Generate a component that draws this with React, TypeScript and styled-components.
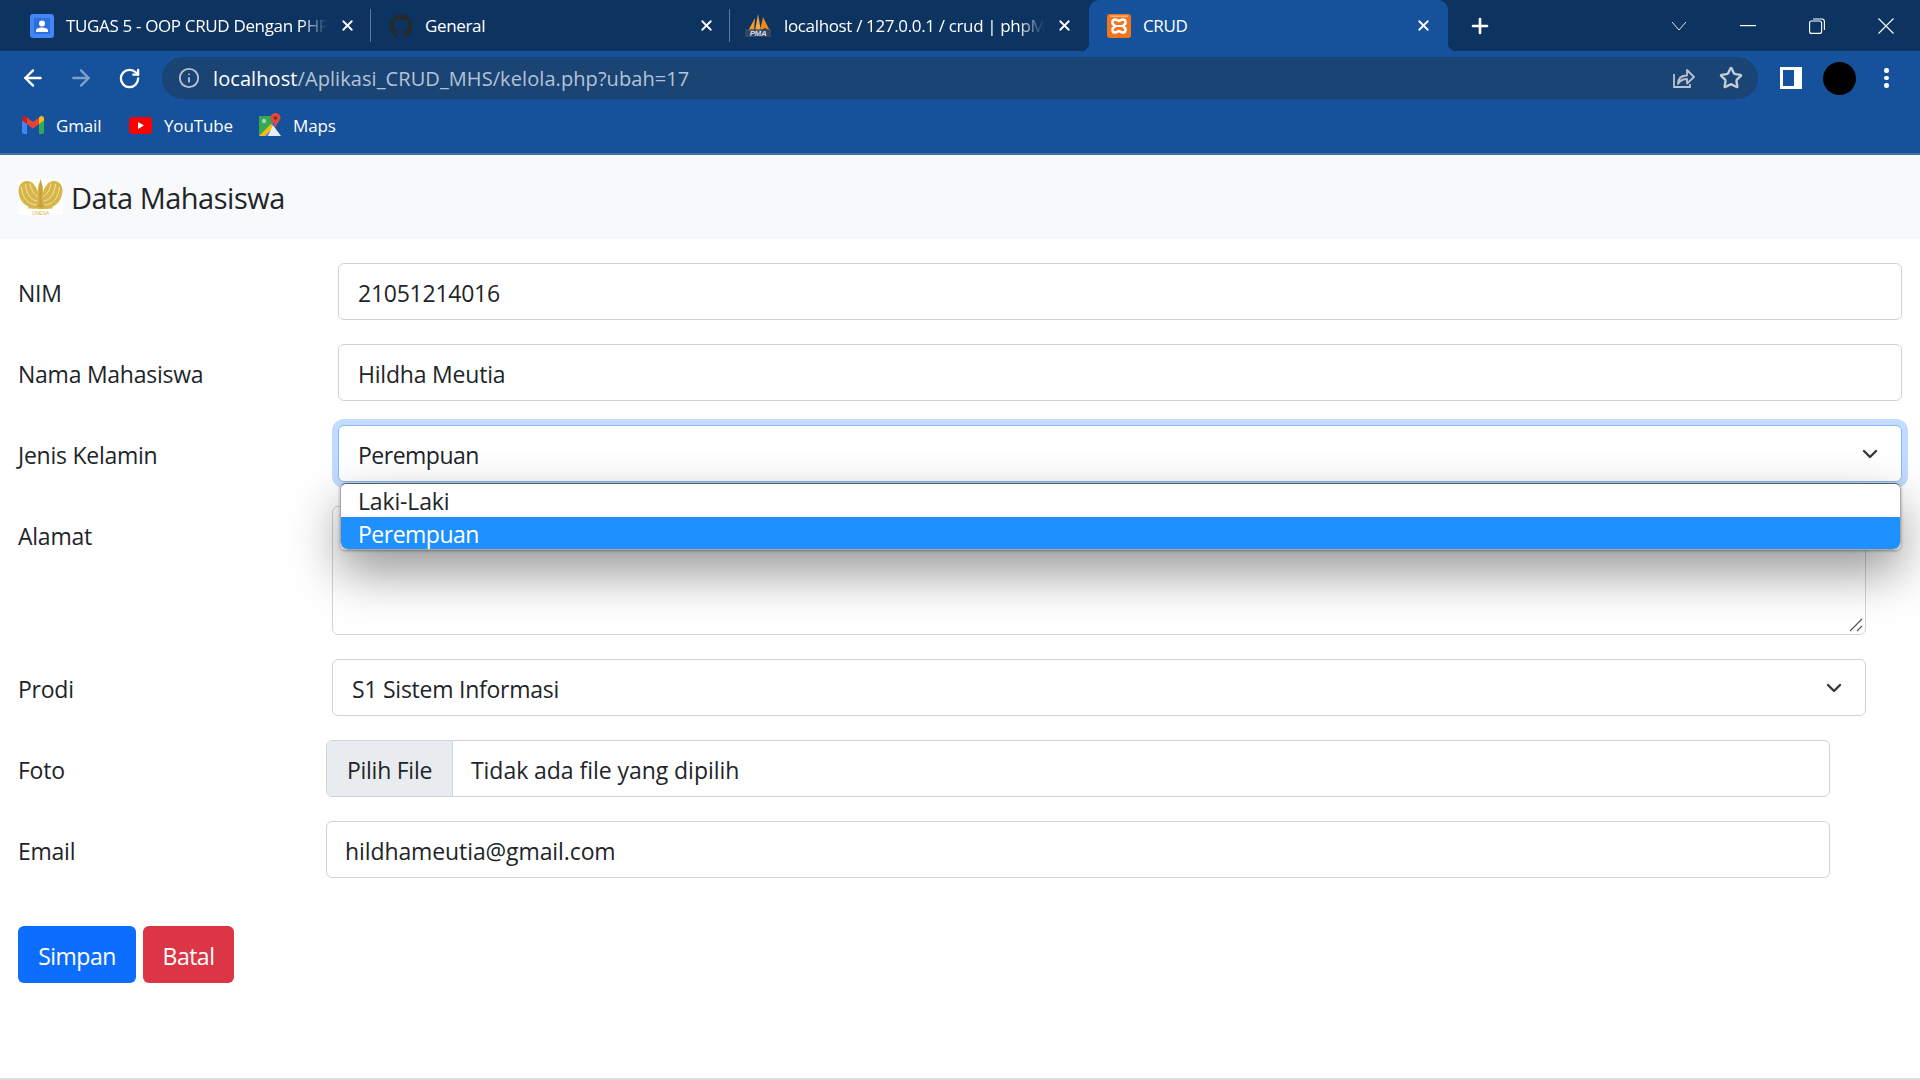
import React from 'react';
import styled, { createGlobalStyle } from 'styled-components';
import { ArrowLeft, ArrowRight, RotateCw, Info, Star, X, Plus, ChevronDown } from 'lucide-react';
import { FaGithub } from 'react-icons/fa';

const FONT = '"Open Sans", "Noto Sans", "Liberation Sans", sans-serif';

const GlobalStyle = createGlobalStyle`
	html, body {
		margin: 0;
		padding: 0;
		background: #fff;
		overflow: hidden;
	}
	body {
		font-family: ${FONT};
		color: #212529;
	}
	* {
		box-sizing: border-box;
	}
`;

const Page = styled.div`
	width: 1920px;
	height: 1080px;
	display: flex;
	flex-direction: column;
	border-bottom: 2px solid #dcdcdc;
	overflow: hidden;
`;

/* browser chrome */
const TabStrip = styled.div`
	height: 51px;
	flex: none;
	display: flex;
	align-items: stretch;
	padding-left: 12px;
	background: #0d3461;
	color: #fff;
`;

const Tab = styled.div<{ $active?: boolean; $sep?: boolean }>`
	position: relative;
	width: 359px;
	flex: none;
	display: flex;
	align-items: center;
	gap: 12px;
	padding: 0 ${(p) => (p.$sep ? 14 : 16)}px 0 18px;
	font-size: 17px;
	letter-spacing: -0.35px;
	background: ${(p) => (p.$active ? '#15529b' : 'transparent')};
	border-radius: ${(p) => (p.$active ? '10px 10px 0 0' : '0')};
	border-right: ${(p) => (p.$sep ? '1px solid #5d7a9b' : 'none')};
	margin: ${(p) => (p.$sep ? '9px 0' : '0')};
	${(p) =>
		p.$active &&
		`
		&::before, &::after {
			content: '';
			position: absolute;
			bottom: 0;
			width: 8px;
			height: 8px;
		}
		&::before {
			left: -8px;
			background: radial-gradient(circle at 0 0, transparent 8px, #15529b 8.5px);
		}
		&::after {
			right: -8px;
			background: radial-gradient(circle at 100% 0, transparent 8px, #15529b 8.5px);
		}
	`}
`;

const TabIcon = styled.span`
	width: 24px;
	height: 24px;
	flex: none;
	display: flex;
	align-items: center;
	justify-content: center;
`;

const TabTitle = styled.span<{ $fade?: boolean }>`
	flex: 1;
	min-width: 0;
	overflow: hidden;
	white-space: nowrap;
	-webkit-mask-image: ${(p) =>
		p.$fade ? 'linear-gradient(to right, #000 calc(100% - 26px), transparent)' : 'none'};
	mask-image: ${(p) =>
		p.$fade ? 'linear-gradient(to right, #000 calc(100% - 26px), transparent)' : 'none'};
`;

const NewTab = styled.div`
	width: 64px;
	flex: none;
	display: flex;
	align-items: center;
	justify-content: center;
`;

const WindowControls = styled.div`
	margin-left: auto;
	display: flex;
	align-items: center;
`;

const WindowButton = styled.div`
	width: 69px;
	height: 42px;
	display: flex;
	align-items: center;
	justify-content: center;
`;

const Toolbar = styled.div`
	height: 48px;
	flex: none;
	display: flex;
	align-items: flex-end;
	padding-left: 9px;
	background: #15529b;
	color: #fff;
`;

const NavButtons = styled.div`
	height: 42px;
	display: flex;
	align-items: center;
`;

const NavButton = styled.div<{ $dim?: boolean }>`
	width: 48px;
	height: 42px;
	display: flex;
	align-items: center;
	justify-content: center;
	opacity: ${(p) => (p.$dim ? 0.45 : 1)};
`;

const AddressBar = styled.div`
	width: 1596px;
	height: 42px;
	margin-left: 9px;
	display: flex;
	align-items: center;
	padding: 0 4px 0 16px;
	background: #1a4474;
	border-radius: 21px;
`;

const Url = styled.div`
	margin-left: 13px;
	flex: 1;
	font-size: 20px;
	letter-spacing: 0.08px;
	color: #b4c3d6;
	white-space: nowrap;
`;

const Host = styled.span`
	color: #fff;
`;

const AddressAction = styled.div`
	width: 47px;
	display: flex;
	align-items: center;
	justify-content: center;
`;

const ToolbarEnd = styled.div`
	height: 42px;
	flex: 1;
	display: flex;
	align-items: center;
	padding-left: 22px;
`;

const Avatar = styled.div`
	width: 33px;
	height: 33px;
	border-radius: 50%;
	background: #000;
	margin-left: 21px;
`;

const Kebab = styled.div`
	margin-left: 28px;
	display: flex;
	flex-direction: column;
	gap: 3px;
`;

const KebabDot = styled.span`
	width: 4.5px;
	height: 4.5px;
	border-radius: 50%;
	background: #fff;
`;

const Bookmarks = styled.div`
	height: 56px;
	flex: none;
	display: flex;
	align-items: center;
	padding: 0 0 2px 22px;
	background: #15529b;
	color: #fff;
	font-size: 17px;
	letter-spacing: -0.15px;
	border-bottom: 2px solid #4472ab;
`;

const Bookmark = styled.div<{ $width: number }>`
	width: ${(p) => p.$width}px;
	display: flex;
	align-items: center;
	gap: 12px;
`;

/* page */
const Navbar = styled.div`
	height: 84px;
	flex: none;
	display: flex;
	align-items: center;
	padding: 0 18px;
	background: #f8f9fa;
	gap: 8px;
`;

const Brand = styled.div`
	font-size: 29px;
	letter-spacing: -0.5px;
	color: #212529;
	margin-top: 1px;
`;

const Form = styled.div`
	padding: 24px 0 0 18px;
	display: flex;
	flex-direction: column;
	gap: 24px;
`;

const Row = styled.div<{ $left: number; $right: number }>`
	display: grid;
	grid-template-columns: ${(p) => p.$left - 18}px ${(p) => p.$right - p.$left}px;
	align-items: start;
`;

const Label = styled.div`
	height: 57px;
	display: flex;
	align-items: center;
	padding-top: 3px;
	font-size: 23px;
	letter-spacing: -0.25px;
	color: #212529;
`;

const Control = styled.div<{ $focus?: boolean; $height?: number; $tracking?: number; $inset?: number }>`
	position: relative;
	height: ${(p) => p.$height ?? 57}px;
	display: flex;
	align-items: ${(p) => (p.$height ? 'flex-start' : 'center')};
	padding: ${(p) => (p.$height ? '12px' : '3px')} ${(p) => p.$inset ?? 19}px 0;
	background: #fff;
	border: 1px solid ${(p) => (p.$focus ? '#86b7fe' : '#ced4da')};
	border-radius: 6px;
	font-size: 23px;
	letter-spacing: ${(p) => p.$tracking ?? -0.25}px;
	color: #212529;
	box-shadow: ${(p) => (p.$focus ? '0 0 0 6px rgba(13, 110, 253, 0.25)' : 'none')};
`;

const Chevron = styled.span<{ $right: number }>`
	position: absolute;
	right: ${(p) => p.$right}px;
	top: 16px;
	display: flex;
	color: #343a40;
`;

const Dropdown = styled.div`
	position: absolute;
	z-index: 5;
	left: 1px;
	top: 57px;
	width: 1561px;
	height: 67px;
	background: #fff;
	border: 1px solid #a8a8a8;
	border-top-color: #5c5c5c;
	border-radius: 6px 6px 8px 8px;
	overflow: hidden;
`;

const DropdownShadow = styled.div`
	position: absolute;
	z-index: 4;
	left: 1px;
	top: 57px;
	width: 1561px;
	height: 67px;
	border-radius: 6px;
	box-shadow: 0 22px 50px rgba(0, 0, 0, 0.42), 0 1px 3px rgba(0, 0, 0, 0.35);
`;

const Option = styled.div<{ $selected?: boolean }>`
	height: 33px;
	display: flex;
	align-items: center;
	background: ${(p) => (p.$selected ? '#1e90ff' : 'transparent')};
	padding-left: 17px;
	color: ${(p) => (p.$selected ? '#fff' : '#212529')};
	letter-spacing: ${(p) => (p.$selected ? -0.5 : -0.15)}px;
`;

const ResizeGrip = styled.svg`
	position: absolute;
	right: 2px;
	bottom: 2px;
`;

const FileButton = styled.div`
	width: 126px;
	height: 55px;
	flex: none;
	display: flex;
	align-items: center;
	justify-content: center;
	padding-top: 3px;
	margin: -3px 0 0 -18px;
	background: #e9ecef;
	border-right: 1px solid #ced4da;
	border-radius: 5px 0 0 5px;
`;

const FileName = styled.span`
	margin-left: 18px;
	letter-spacing: -0.05px;
`;

const Actions = styled.div`
	display: flex;
	gap: 7px;
	margin-top: 24px;
`;

const Button = styled.div<{ $color: string; $width: number }>`
	width: ${(p) => p.$width}px;
	height: 57px;
	display: flex;
	align-items: center;
	justify-content: center;
	padding-top: 2px;
	border-radius: 6px;
	background: ${(p) => p.$color};
	color: #fff;
	font-size: 23px;
	letter-spacing: -0.5px;
`;

const ClassroomIcon = () => (
	<svg width="24" height="24" viewBox="0 0 24 24">
		<rect width="24" height="24" rx="3" fill="#4285f4" />
		<rect x="4" y="4" width="16" height="16" fill="#2f6fdb" />
		<circle cx="12" cy="9.5" r="3" fill="#fff" />
		<path d="M6 18v-1.5c0-2 3-3 6-3s6 1 6 3V18z" fill="#fff" />
	</svg>
);

const PmaIcon = () => (
	<svg width="26" height="24" viewBox="0 0 26 24" style={{ flex: 'none', marginLeft: '-4px' }}>
		<path d="M3 17 10 4l-1 13z" fill="#f89c1c" />
		<path d="M10 17 13 0l3 17z" fill="#f7a942" />
		<path d="M15 17 18 3l7 14-5-3z" fill="#ee8a17" />
		<rect x="0" y="15" width="26" height="8" fill="#3d4b69" opacity="0.75" />
		<text x="13" y="22" fontSize="8" fontWeight="700" fontStyle="italic" textAnchor="middle" fill="#d8dce6" fontFamily="Liberation Sans">PMA</text>
	</svg>
);

const XamppIcon = () => (
	<svg width="24" height="24" viewBox="0 0 24 24">
		<rect width="24" height="24" rx="3" fill="#f0751f" />
		<rect x="3" y="1.5" width="18" height="1.6" fill="#fbb27a" />
		<path d="M8 5.5c2 0 3 1.5 4 1.5s2-1.5 4-1.5c2.5 0 3.5 3.5 1.5 5L16 12l1.5 1.5c2 1.5 1 5-1.500 5-2 0-3-1.500-4-1.500s-2 1.500-4 1.500c-2.500 0-3.500-3.500-1.500-5L8 12l-1.500-1.500C4.500 9 5.500 5.500 8 5.500z" fill="none" stroke="#fff" strokeWidth="2.6" />
		<path d="M9 12h6" stroke="#fff" strokeWidth="2" />
	</svg>
);

const ShareIcon = () => (
	<svg width="24" height="24" viewBox="0 0 24 24" fill="none" stroke="#b9c3cf" strokeWidth="1.8">
		<path d="M2 8v13h16v-3" />
		<path d="M6 18c0-5 3-8.500 9-8.500V4l7 7-7 6.500V13c-4 0-7 1.500-9 5z" strokeLinejoin="round" />
	</svg>
);

const SidePanelIcon = () => (
	<svg width="22" height="22" viewBox="0 0 22 22">
		<rect width="22" height="22" fill="#fff" />
		<rect x="3" y="3" width="11" height="16" fill="#15529b" />
	</svg>
);

const GmailIcon = () => (
	<svg width="22" height="18" viewBox="0 0 22 18">
		<path d="M0 3v13c0 1 .7 2 2 2h3V7z" fill="#4285f4" />
		<path d="M22 3v13c0 1-.7 2-2 2h-3V7z" fill="#34a853" />
		<path d="M5 8 0 4.500V2.500C0 .5 2.300-.6 3.800.5L5 1.500z" fill="#c5221f" />
		<path d="M5 8V1.500L11 6l6-4.500V8l-6 4.500z" fill="#ea4335" />
		<path d="M17 8l5-3.500v-2c0-2-2.300-3.100-3.800-2L17 1.500z" fill="#fbbc04" />
	</svg>
);

const YoutubeIcon = () => (
	<svg width="23" height="17" viewBox="0 0 23 17">
		<rect width="23" height="17" rx="4" fill="#f00" />
		<path d="M9 5l6 3.500L9 12z" fill="#fff" />
	</svg>
);

const MapsIcon = () => (
	<svg width="22" height="24" viewBox="0 0 22 24">
		<path d="M0 3h14v20H0z" fill="#34a853" />
		<path d="M0 23 14 9v14z" fill="#4285f4" />
		<path d="M0 23 12 11l3 3-9 9z" fill="#fbbc04" />
		<path d="M14 12l8 11H9z" fill="#e8eef7" />
		<circle cx="5" cy="8" r="2.200" fill="#9fd6ae" />
		<path d="M16.500 0c3 0 5 2.200 5 4.800 0 3-3.500 5-5 10-1.500-5-5-7-5-10 0-2.600 2-4.800 5-4.800z" fill="#dd4b3e" />
		<circle cx="16.500" cy="5" r="1.800" fill="#8a2a22" />
	</svg>
);

const Wing = () => (
	<>
		<path d="M20 29C8 30 0 22 0.500 10 1.500 4 6 1.500 10 2 15 3 18 7 20 13z" fill="#d8b548" />
		<g fill="none" stroke="#f1e3ae" strokeWidth="1">
			<path d="M19 26C10 26 4.500 19 3.500 8" />
			<path d="M19 22C12.500 21 8.500 15 7.500 5" />
			<path d="M19.500 17.500C16 15 13 11 12 4.500" />
		</g>
	</>
);

const UnesaLogo = () => (
	<svg width="45" height="36" viewBox="0 0 45 36">
		<rect width="45" height="36" fill="#fff" />
		<Wing />
		<g transform="translate(45 0) scale(-1 1)">
			<Wing />
		</g>
		<path d="M22.500 0 24.800 8V25l3 4h-10.600l3-4V8z" fill="#c9a336" />
		<path d="M9 29c5-2.500 9-2.500 13.500 0 4.500-2.500 8.500-2.500 13.500 0-5 1.500-22 1.500-27 0z" fill="#d8b548" />
		<text x="22.500" y="35.500" fontSize="5" textAnchor="middle" fill="#d8b548" fontFamily="Liberation Sans">UNESA</text>
	</svg>
);

const App = () => {
	return (
		<Page>
			<GlobalStyle />
			<TabStrip>
				<Tab $sep>
					<TabIcon><ClassroomIcon /></TabIcon>
					<TabTitle $fade>TUGAS 5 - OOP CRUD Dengan PHP dan MySQL</TabTitle>
					<X size={17} strokeWidth={2.5} />
				</Tab>
				<Tab $sep>
					<TabIcon><FaGithub size={24} color="#24292e" /></TabIcon>
					<TabTitle>General</TabTitle>
					<X size={17} strokeWidth={2.5} />
				</Tab>
				<Tab>
					<TabIcon><PmaIcon /></TabIcon>
					<TabTitle $fade>localhost / 127.0.0.1 / crud | phpMyAdmin</TabTitle>
					<X size={17} strokeWidth={2.5} />
				</Tab>
				<Tab $active>
					<TabIcon><XamppIcon /></TabIcon>
					<TabTitle>CRUD</TabTitle>
					<X size={17} strokeWidth={2.5} />
				</Tab>
				<NewTab><Plus size={24} strokeWidth={2.6} /></NewTab>
				<WindowControls>
					<WindowButton>
						<svg width="16" height="10" viewBox="0 0 16 10" fill="none" stroke="#dfe6ee" strokeWidth="1"><path d="M1 1l7 8 7-8" /></svg>
					</WindowButton>
					<WindowButton>
						<svg width="16" height="2" viewBox="0 0 16 2"><rect width="16" height="1.200" fill="#fff" /></svg>
					</WindowButton>
					<WindowButton>
						<svg width="16" height="16" viewBox="0 0 16 16" fill="none" stroke="#fff" strokeWidth="1.100"><rect x="0.600" y="3" width="12" height="12.400" rx="2" /><path d="M4 1h9a2.500 2.500 0 0 1 2.400 2.500V12" /></svg>
					</WindowButton>
					<WindowButton>
						<svg width="16" height="16" viewBox="0 0 16 16" stroke="#fff" strokeWidth="1.100"><path d="M0.500 0.500l15 15M15.500 0.500l-15 15" /></svg>
					</WindowButton>
				</WindowControls>
			</TabStrip>
			<Toolbar>
				<NavButtons>
					<NavButton><ArrowLeft size={26} strokeWidth={2.2} /></NavButton>
					<NavButton $dim><ArrowRight size={26} strokeWidth={2.2} /></NavButton>
					<NavButton><RotateCw size={23} strokeWidth={2.4} /></NavButton>
				</NavButtons>
				<AddressBar>
					<Info size={22} color="#b9c3cf" strokeWidth={2} />
					<Url><Host>localhost</Host>/Aplikasi_CRUD_MHS/kelola.php?ubah=17</Url>
					<AddressAction><ShareIcon /></AddressAction>
					<AddressAction><Star size={24} color="#c4ccd6" strokeWidth={2.4} /></AddressAction>
				</AddressBar>
				<ToolbarEnd>
					<SidePanelIcon />
					<Avatar />
					<Kebab><KebabDot /><KebabDot /><KebabDot /></Kebab>
				</ToolbarEnd>
			</Toolbar>
			<Bookmarks>
				<Bookmark $width={107}><GmailIcon />Gmail</Bookmark>
				<Bookmark $width={130}><YoutubeIcon />YouTube</Bookmark>
				<Bookmark $width={100}><MapsIcon />Maps</Bookmark>
			</Bookmarks>
			<Navbar>
				<UnesaLogo />
				<Brand>Data Mahasiswa</Brand>
			</Navbar>
			<Form>
				<Row $left={338} $right={1902}>
					<Label>NIM</Label>
					<Control>21051214016</Control>
				</Row>
				<Row $left={338} $right={1902}>
					<Label>Nama Mahasiswa</Label>
					<Control $tracking={-0.2}>Hildha Meutia</Control>
				</Row>
				<Row $left={338} $right={1902}>
					<Label>Jenis Kelamin</Label>
					<Control $focus $tracking={-0.5}>
						Perempuan
						<Chevron $right={19}><ChevronDown size={24} strokeWidth={2.4} /></Chevron>
						<DropdownShadow />
						<Dropdown>
							<Option>Laki-Laki</Option>
							<Option $selected>Perempuan</Option>
						</Dropdown>
					</Control>
				</Row>
				<Row $left={332} $right={1866}>
					<Label>Alamat</Label>
					<Control $height={129}>
						Bayu
						<ResizeGrip width="14" height="14" viewBox="0 0 14 14" stroke="#555" strokeWidth="1.200">
							<path d="M1 13 13 1M8 13l5-5" />
						</ResizeGrip>
					</Control>
				</Row>
				<Row $left={332} $right={1866}>
					<Label>Prodi</Label>
					<Control>
						S1 Sistem Informasi
						<Chevron $right={19}><ChevronDown size={24} strokeWidth={2.4} /></Chevron>
					</Control>
				</Row>
				<Row $left={326} $right={1830}>
					<Label>Foto</Label>
					<Control $inset={18}>
						<FileButton>Pilih File</FileButton>
						<FileName>Tidak ada file yang dipilih</FileName>
					</Control>
				</Row>
				<Row $left={326} $right={1830}>
					<Label>Email</Label>
					<Control $inset={18} $tracking={-0.1}>hildhameutia@gmail.com</Control>
				</Row>
				<Actions>
					<Button $color="#0d6efd" $width={118}>Simpan</Button>
					<Button $color="#dc3545" $width={91}>Batal</Button>
				</Actions>
			</Form>
		</Page>
	);
};

export default App;
